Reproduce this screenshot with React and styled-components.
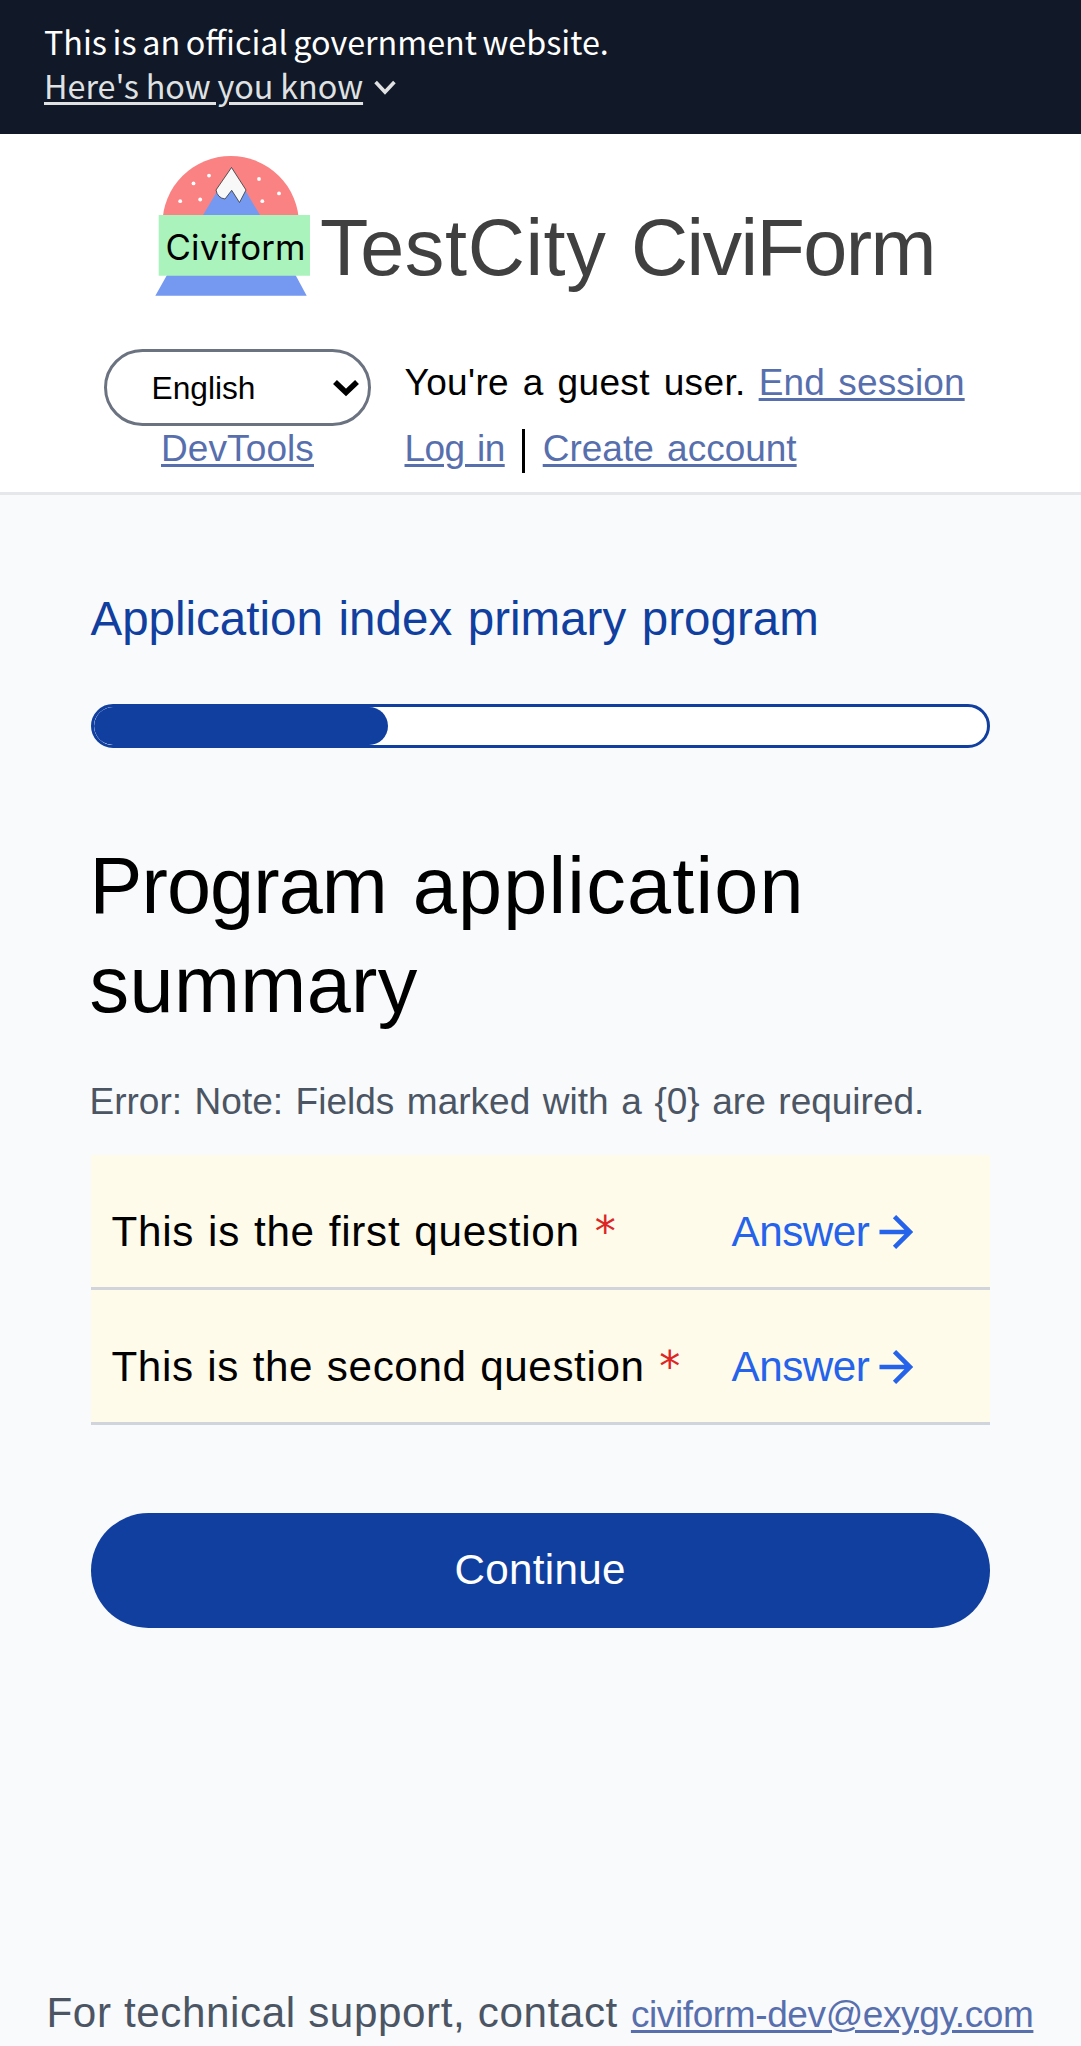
import React from "react";
import styled, { createGlobalStyle } from "styled-components";

const GlobalStyle = createGlobalStyle`
  *, *::before, *::after { box-sizing: border-box; }
  body {
    margin: 0;
    background: #f8fafc;
    color: #000;
    font-family: "Liberation Sans", Arial, sans-serif;
    font-size: 37px;
  }
  h1, h2, p, ul { margin: 0; padding: 0; font-weight: 400; }
`;

const Page = styled.div`
  display: flex;
  flex-direction: column;
  width: 100%;
  height: 2046px;
  overflow: hidden;
`;

const Banner = styled.section`
  height: 134.4px;
  padding: 19.4px 44px 0;
  background: #111827;
  color: #fff;
  font-family: "Noto Sans CJK SC", "Noto Sans", sans-serif;
  font-size: 32.3px;
  line-height: 44px;
`;

const BannerText = styled.p`
  word-spacing: -1.6px;
`;

const BannerToggle = styled.div`
  display: flex;
  align-items: center;
  gap: 11px;
  height: 44px;
  color: #dfe1e2;
`;

const BannerLink = styled.span`
  text-decoration: underline;
  text-decoration-thickness: 3px;
  text-underline-offset: 3px;
  word-spacing: -0.4px;
`;

const ChevronIcon = styled.svg`
  display: block;
  width: 22px;
  height: 15px;
  margin-top: 5px;
`;

const Header = styled.header`
  height: 360.6px;
  background: #fff;
  border-bottom: 3px solid #e5e7eb;
`;

const Brand = styled.div`
  display: flex;
  align-items: flex-start;
  padding: 20.6px 0 0 155px;
`;

const Logo = styled.svg`
  display: block;
  flex: none;
  width: 156px;
  height: 142px;
`;

const SiteTitle = styled.div`
  display: flex;
  gap: 24.5px;
  margin: 43px 0 0 9px;
  color: #404040;
  font-size: 79.2px;
  line-height: 100px;
  white-space: nowrap;
`;

const Word = styled.span`
  letter-spacing: ${(p) => p.$tracking}px;
`;

const Nav = styled.nav`
  display: flex;
  align-items: flex-start;
  padding: 51.2px 0 0 104px;
`;

const LanguageColumn = styled.div`
  display: flex;
  flex-direction: column;
  align-items: center;
  width: 267px;
`;

const LanguageSelect = styled.div`
  display: flex;
  align-items: center;
  justify-content: space-between;
  width: 100%;
  height: 77px;
  padding: 0 9px 0 44.5px;
  border: 3px solid #6b7280;
  border-radius: 39px;
  font-size: 31.7px;
  line-height: 40px;
`;

const SelectArrow = styled.svg`
  display: block;
  width: 26px;
  height: 18px;
  margin-top: 1px;
`;

const AccountColumn = styled.div`
  display: flex;
  flex-direction: column;
  gap: 22px;
  margin: 12.2px 0 0 33.5px;
`;

const AccountLine = styled.div`
  display: flex;
  align-items: center;
  height: 44px;
  line-height: 44px;
  white-space: nowrap;
`;

const GuestText = styled.span`
  margin-right: 13px;
  letter-spacing: 0.35px;
  word-spacing: 3.2px;
`;

const Link = styled.a`
  color: #586fae;
  font-size: 37px;
  line-height: 44px;
  letter-spacing: ${(p) => p.$tracking || 0}px;
  word-spacing: 3px;
  text-decoration: underline;
  text-decoration-thickness: 3px;
  text-underline-offset: 3px;
  margin-top: ${(p) => p.$top || 0}px;
`;

const Divider = styled.span`
  width: 3px;
  height: 44px;
  margin: 3px 17.5px 0 17.5px;
  background: #000;
`;

const Main = styled.main`
  display: flex;
  flex-direction: column;
  padding: 90.75px 91.25px 0 90.5px;
`;

const ProgramName = styled.h2`
  color: #113f9f;
  font-size: 47.5px;
  line-height: 66px;
  letter-spacing: 0;
  word-spacing: 2.5px;
`;

const Progress = styled.div`
  height: 44px;
  margin-top: 52.5px;
  border: 3px solid #113f9f;
  border-radius: 22px;
  background: #fff;
  overflow: hidden;
`;

const ProgressFill = styled.div`
  width: 33%;
  height: 100%;
  border-radius: 20px;
  background: #113f9f;
`;

const PageTitle = styled.h1`
  margin: 88px 0 0 -1px;
  font-size: 79.2px;
  line-height: 99px;
  word-spacing: 4px;
`;

const Note = styled.p`
  margin: 39.6px 0 0 -1px;
  color: #4b5563;
  line-height: 55px;
  word-spacing: 2.3px;
  white-space: nowrap;
`;

const QuestionList = styled.ul`
  margin-top: 26.3px;
  list-style: none;
`;

const QuestionRow = styled.li`
  display: flex;
  align-items: center;
  height: 134.75px;
  padding: 22px 77px 0 21px;
  border-bottom: 3px solid #d1d5db;
  background: #fffbeb;
  font-size: 42.2px;
  line-height: 66px;
`;

const Question = styled.span`
  flex: 1;
  letter-spacing: ${(p) => p.$tracking}px;
  word-spacing: 1.4px;
  white-space: nowrap;
`;

const Required = styled.span`
  margin-left: 1px;
  color: #dc2626;
  font-family: "DejaVu Sans", sans-serif;
  font-size: 42px;
  line-height: 1;
`;

const AnswerLink = styled.a`
  display: flex;
  align-items: center;
  gap: 9.5px;
  color: #2563eb;
  letter-spacing: -0.5px;
`;

const ArrowIcon = styled.svg`
  display: block;
  width: 34px;
  height: 34px;
`;

const ContinueButton = styled.button`
  height: 115px;
  margin-top: 88px;
  padding: 0;
  border: 0;
  border-radius: 58px;
  background: #113f9f;
  color: #fff;
  font: 42.2px/66px "Liberation Sans", Arial, sans-serif;
  letter-spacing: 0.3px;
`;

const Footer = styled.footer`
  display: flex;
  align-items: baseline;
  margin-top: 352px;
  padding-left: 46.5px;
  color: #4b5563;
  font-size: 42.2px;
  line-height: 66px;
  white-space: nowrap;
`;

const SupportText = styled.span`
  margin-right: 13px;
  letter-spacing: 0.6px;
`;

function CiviformLogo() {
  return (
    <Logo viewBox="155 155 156 142" role="img" aria-label="Civiform">
      <path d="M162.4 224.3a68.3 68.3 0 0 1 136.6 0z" fill="#fa8282" />
      <path d="M231.5 167L196 227h71z" fill="#7598f1" />
      <path
        d="M231.5 167.5L216 190q1.5 8 9 9l6.7-8.7 7.8 12.2 6.5-12.5z"
        fill="#f8f8f8"
        stroke="#333"
        strokeWidth="0.8"
      />
      <g fill="#fff">
        <circle cx="209" cy="175.6" r="1.9" />
        <circle cx="193.5" cy="183.4" r="1.9" />
        <circle cx="180.2" cy="201.2" r="1.9" />
        <circle cx="200.2" cy="199.5" r="1.9" />
        <circle cx="259" cy="179" r="1.9" />
        <circle cx="279" cy="193.4" r="1.9" />
        <circle cx="262.3" cy="201.2" r="1.9" />
      </g>
      <path d="M167 275h128.5l11.2 20.8H155.3z" fill="#7598f1" />
      <path d="M158.7 215H310v60.7H158.7z" fill="#abf3bd" />
      <text x="165.5" y="260" fontFamily="Inter, sans-serif" fontSize="34.8" letterSpacing="0.2">
        Civiform
      </text>
    </Logo>
  );
}

const questions = [
  { text: "This is the first question", tracking: 0.75 },
  { text: "This is the second question", tracking: 0.6 },
];

export default function App() {
  return (
    <Page>
      <GlobalStyle />
      <Banner>
        <BannerText>This is an official government website.</BannerText>
        <BannerToggle>
          <BannerLink>Here's how you know</BannerLink>
          <ChevronIcon viewBox="0 0 22 15" fill="none" stroke="currentColor" strokeWidth="3.6">
            <path d="M1.6 2L11 12L20.4 2" />
          </ChevronIcon>
        </BannerToggle>
      </Banner>
      <Header>
        <Brand>
          <CiviformLogo />
          <SiteTitle>
            <Word $tracking={0.6}>TestCity</Word>
            <Word $tracking={-1.6}>CiviForm</Word>
          </SiteTitle>
        </Brand>
        <Nav>
          <LanguageColumn>
            <LanguageSelect>
              English
              <SelectArrow viewBox="0 0 26 18" fill="none" stroke="#000" strokeWidth="5.6">
                <path d="M2 3L13 13.5L24 3" />
              </SelectArrow>
            </LanguageSelect>
            <Link $tracking={0.1} $top={1.2}>DevTools</Link>
          </LanguageColumn>
          <AccountColumn>
            <AccountLine>
              <GuestText>You're a guest user.</GuestText>
              <Link $tracking={0.13}>End session</Link>
            </AccountLine>
            <AccountLine>
              <Link $tracking={-0.6}>Log in</Link>
              <Divider />
              <Link>Create account</Link>
            </AccountLine>
          </AccountColumn>
        </Nav>
      </Header>
      <Main>
        <ProgramName>Application index primary program</ProgramName>
        <Progress>
          <ProgressFill />
        </Progress>
        <PageTitle>
          <Word $tracking={-0.9}>Program</Word> <Word $tracking={1.2}>application</Word>{" "}
          <Word $tracking={0.4}>summary</Word>
        </PageTitle>
        <Note>Error: Note: Fields marked with a {"{0}"} are required.</Note>
        <QuestionList>
          {questions.map((q) => (
            <QuestionRow key={q.text}>
              <Question $tracking={q.tracking}>
                {q.text} <Required>*</Required>
              </Question>
              <AnswerLink>
                Answer
                <ArrowIcon viewBox="0 0 34 34" fill="none" stroke="currentColor" strokeWidth="4.6">
                  <path d="M0.5 17H30M15.5 1.6L31 17L15.5 32.4" />
                </ArrowIcon>
              </AnswerLink>
            </QuestionRow>
          ))}
        </QuestionList>
        <ContinueButton>Continue</ContinueButton>
      </Main>
      <Footer>
        <SupportText>For technical support, contact</SupportText>
        <Link $tracking={-0.39}>civiform-dev@exygy.com</Link>
      </Footer>
    </Page>
  );
}
